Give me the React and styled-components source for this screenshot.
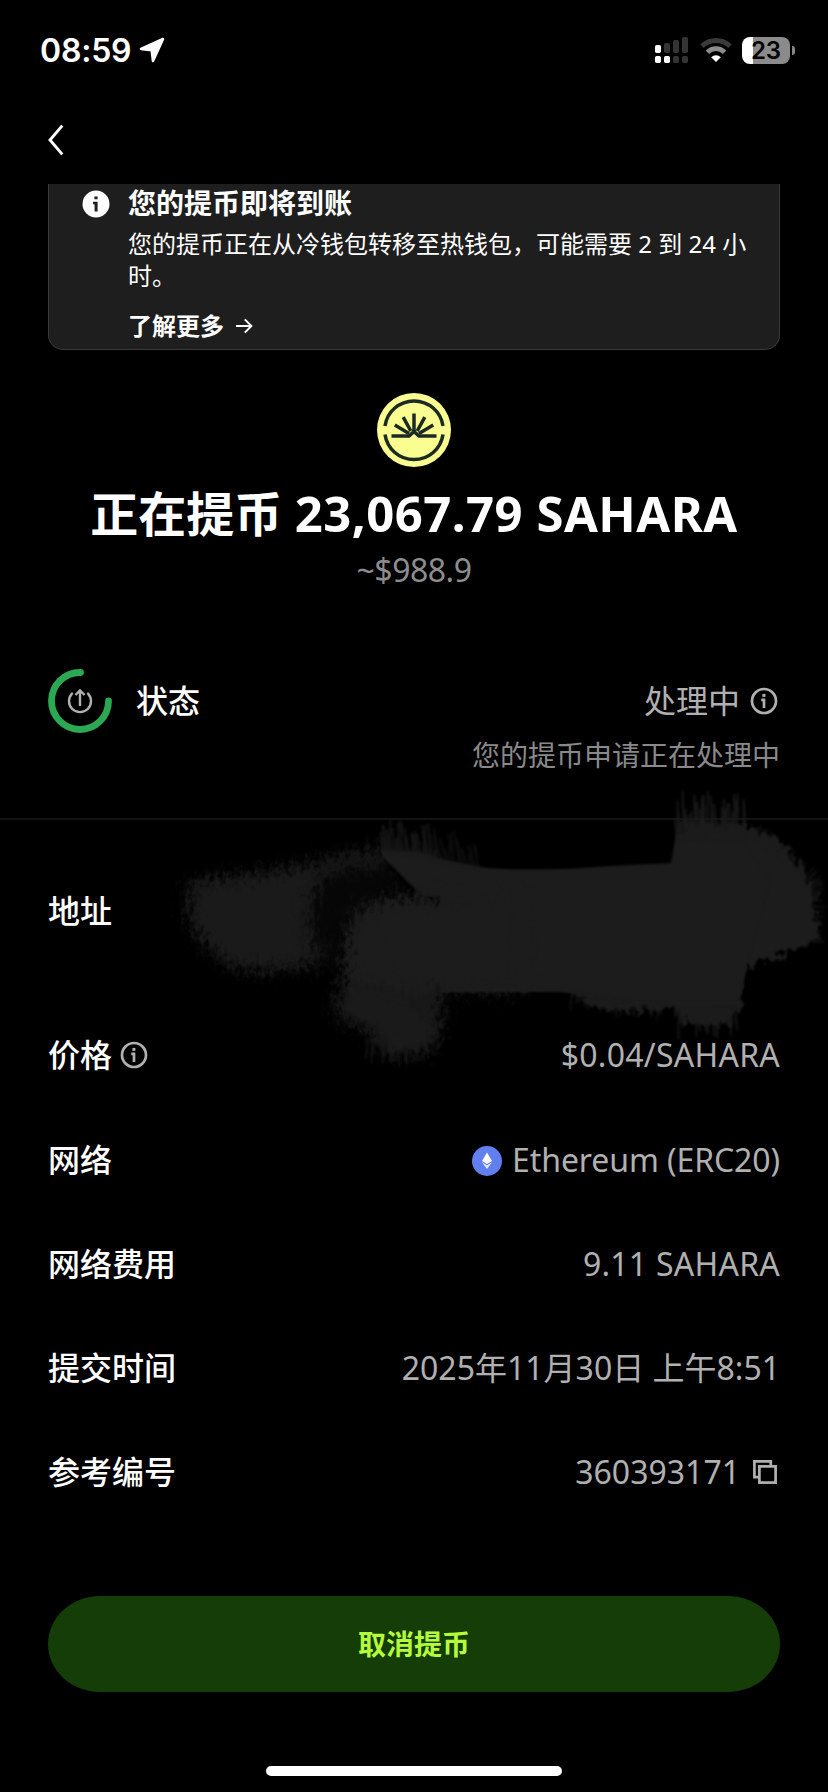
import React from "react";
import styled, { createGlobalStyle } from "styled-components";

const Global = createGlobalStyle`
  * { box-sizing: border-box; }
  html, body { margin: 0; background: #000; }
  body {
    font-family: "Noto Sans", "Noto Sans CJK SC", sans-serif;
    color: #fff;
    font-size: 32px;
  }
  svg { display: block; flex: none; }
`;

const Screen = styled.div`
  position: relative;
  width: 828px;
  height: 1792px;
  background: #000;
  overflow: hidden;
  display: flex;
  flex-direction: column;
`;

const StatusBar = styled.header`
  height: 98px;
  padding: 2px 33px 0 40px;
  display: flex;
  align-items: center;
  justify-content: space-between;
  flex: none;
`;

const Clock = styled.div`
  display: flex;
  align-items: center;
  gap: 8px;
  font: 600 32px/40px Inter, sans-serif;
  span { padding-top: 1px; letter-spacing: -0.2px; }
`;

const Indicators = styled.div`
  display: flex;
  align-items: center;
  gap: 11px;
`;

const Battery = styled.div`
  position: relative;
  width: 48px;
  height: 27px;
  margin-right: 5px;
  margin-left: -1px;
  border-radius: 8px;
  background: linear-gradient(90deg, #fff 11px, #8b8b8b 11px);
  color: #000;
  text-align: center;
  font: 600 24px/27px Inter, sans-serif;
  &::after {
    content: "";
    position: absolute;
    right: -5px;
    top: 9px;
    width: 3px;
    height: 9px;
    border-radius: 0 4px 4px 0;
    background: #858585;
  }
`;

const NavBar = styled.nav`
  height: 86px;
  padding: 25px 0 0 46px;
  flex: none;
`;

const Notice = styled.section`
  width: 732px;
  height: 166px;
  margin: 0 auto;
  padding: 0 30px 0 33px;
  display: flex;
  gap: 18px;
  flex: none;
  background: #1e1e1e;
  border: 1px solid #393939;
  border-top: 0;
  border-radius: 0 0 15px 15px;
`;

const NoticeIcon = styled.div`
  padding-top: 6px;
  width: 28px;
  flex: none;
`;

const NoticeBody = styled.div`
  display: flex;
  flex-direction: column;
`;

const NoticeTitle = styled.h2`
  margin: 0;
  font-size: 28px;
  line-height: 38px;
  font-weight: 600;
`;

const NoticeText = styled.p`
  margin: 6px 0 0;
  font-size: 24px;
  line-height: 32px;
  width: 640px;
`;

const NoticeLink = styled.a`
  margin-top: 18px;
  display: flex;
  align-items: center;
  gap: 12px;
  font-size: 24px;
  line-height: 32px;
  font-weight: 600;
`;

const Summary = styled.section`
  display: flex;
  flex-direction: column;
  align-items: center;
  padding-top: 43px;
  height: 304px;
  flex: none;
`;

const Amount = styled.h1`
  margin: 14px 0 0;
  font-size: 48px;
  line-height: 64px;
  font-weight: 700;
  white-space: nowrap;
  span { font-size: 49px; letter-spacing: 0.5px; }
`;

const Fiat = styled.div`
  margin-top: 2px;
  font-size: 32px;
  line-height: 44px;
  letter-spacing: -0.5px;
  color: #8d8d8d;
`;

const Status = styled.section`
  height: 166px;
  padding: 15px 48px 0;
  border-bottom: 2px solid #121212;
  flex: none;
`;

const Details = styled.section`
  padding: 0 48px;
  height: 776px;
  flex: none;
`;

const Row = styled.div`
  height: ${(p) => p.$height || 104}px;
  padding-bottom: 4px;
  padding-right: ${(p) => p.$right || 0}px;
  display: flex;
  align-items: center;
  justify-content: space-between;
  white-space: nowrap;
  svg { margin: 4px 0 0; }
`;

const Label = styled.div`
  display: flex;
  align-items: center;
  gap: ${(p) => p.$gap || 8}px;
  font-weight: 500;
`;

const Value = styled.div`
  display: flex;
  align-items: center;
  padding-top: ${(p) => p.$drop || 0}px;
  gap: ${(p) => p.$gap || 10}px;
  color: #b0b0b0;
  letter-spacing: ${(p) => p.$track || 0}px;
`;

const StatusNote = styled.div`
  text-align: right;
  font-size: 28px;
  line-height: 44px;
  color: #898989;
`;

const CancelButton = styled.button`
  width: 732px;
  height: 96px;
  margin: 0 auto;
  padding: 0;
  border: 0;
  border-radius: 52px / 48px;
  background: #143d08;
  color: #b5fb3c;
  font: 600 28px/40px "Noto Sans", "Noto Sans CJK SC", sans-serif;
  flex: none;
`;

const HomeBar = styled.div`
  width: 296px;
  height: 10px;
  margin: 74px auto 0;
  border-radius: 5px;
  background: #fff;
  flex: none;
`;

const ScribbleLayer = styled.svg`
  position: absolute;
  left: 0;
  top: 0;
  pointer-events: none;
`;

const InfoIcon = () => (
  <svg width="28" height="28" viewBox="0 0 28 28" fill="none">
    <circle cx="14" cy="14" r="12" stroke="#b0b0b0" strokeWidth="2.7" />
    <rect x="12.4" y="6.9" width="3" height="3" fill="#b0b0b0" />
    <path d="M11.2 12.8H14V21" stroke="#b0b0b0" strokeWidth="2.7" />
  </svg>
);

const Coin = () => (
  <svg width="74" height="74" viewBox="-37 -37 74 74" fill="none">
    <circle r="37" fill="#fafd90" />
    <g stroke="#1b2a22" strokeWidth="3.5">
      <path d="M-29-4A29.3 29.3 0 0 1 29-4" />
      <path d="M-29 4.5A29.3 29.3 0 0 0 29 4.5" />
      <path d="M-22.5 6H-5L0 1.5L5 6H22.5" />
      <path d="M0 2V-16.5M-3.2 1L-10.8-12.8M3.2 1L10.8-12.8M-5 3.5L-19.2-5M5 3.5L19.2-5" />
    </g>
    <path d="M-6.5 7L0-1L6.5 7L4 7L0 3L-4 7Z" fill="#1b2a22" />
  </svg>
);

const rand = (n) => {
  const v = Math.sin(n * 127.1 + 11.7) * 43758.5453;
  return v - Math.floor(v);
};

const bristles = (count, seed, x0, y0, x1, y1, dx, dy, spread) =>
  Array.from({ length: count }, (_, i) => {
    const t = (i + rand(seed + i)) / count;
    const len = 0.15 + 0.85 * rand(seed + i * 3 + 1);
    const x = x0 + (x1 - x0) * t;
    const y = y0 + (y1 - y0) * t;
    const ex = x + dx * len + (rand(seed + i * 7) - 0.5) * spread;
    const ey = y + dy * len;
    return `M${x.toFixed(1)} ${y.toFixed(1)}L${ex.toFixed(1)} ${ey.toFixed(1)}`;
  }).join("");

const Scribble = () => (
  <ScribbleLayer width="828" height="1792" viewBox="0 0 828 1792" fill="none">
    <defs>
      <filter id="rough" x="-10%" y="-10%" width="120%" height="120%" colorInterpolationFilters="sRGB">
        <feTurbulence type="fractalNoise" baseFrequency="0.16 0.09" numOctaves="3" seed="4" />
        <feDisplacementMap in="SourceGraphic" scale="24" xChannelSelector="R" yChannelSelector="G" />
        <feGaussianBlur stdDeviation="1" />
      </filter>
      <filter id="dry" x="-20%" y="-20%" width="140%" height="140%" colorInterpolationFilters="sRGB">
        <feGaussianBlur in="SourceGraphic" stdDeviation="7" result="b" />
        <feTurbulence type="fractalNoise" baseFrequency="0.2 0.14" numOctaves="3" seed="9" result="n" />
        <feDisplacementMap in="b" in2="n" scale="28" xChannelSelector="R" yChannelSelector="G" />
        <feGaussianBlur stdDeviation="0.6" />
      </filter>
      <filter id="soft" x="-5%" y="-5%" width="110%" height="110%" colorInterpolationFilters="sRGB">
        <feGaussianBlur stdDeviation="0.9" />
      </filter>
    </defs>
    <g filter="url(#dry)">
      <path d="M188 882L250 874L318 862L345 854L385 848L385 900L327 915L326 963L264 972L227 966L208 947L190 925Z" fill="#1a1a1a" />
      <path d="M345 925L364 903L430 896L440 992L345 990L342 960Z" fill="#1c1c1c" />
      <path d="M340 985L398 988L442 992L442 1030L425 1056L385 1054L364 1027L333 1018Z" fill="#181818" />
    </g>
    <path d="M318 880L345 868L383 864L410 888L422 897L375 902L340 915L330 950L314 950L310 912Z" fill="#060606" filter="url(#dry)" />
    <g filter="url(#rough)" fill="#1c1c1c">
      <path d="M682 822L744 824L778 840L800 864L817 900L817 938L799 950L747 966L738 1010L732 1024L690 1027L674 1004L650 1011L600 1009L565 990L450 985L440 905L600 880L682 872Z" />
      <path d="M352 989L394 989L432 1030L430 1046L390 1050L370 1020L345 1010Z" fill="#1a1a1a" />
    </g>
    <path d="M380 850L383 857L422 896L440 896L440 992L560 992L620 1000L735 1000L740 1000L748 960L770 880L740 838L676 834L671 863L610 866Q540 872 486 868L445 860L420 852Z" fill="#1c1c1c" filter="url(#soft)" />
    <path d="M375 904Q400 896 428 897L520 897L520 990H395Q365 950 375 904Z" fill="#1c1c1c" filter="url(#dry)" />
    <g stroke="#1b1b1b" strokeWidth="2" filter="url(#soft)">
      <path d={bristles(46, 2, 381, 852, 435, 860, -1, -36, 6)} strokeOpacity=".75" />
      <path d={bristles(30, 5, 430, 860, 480, 870, -6, -36, 6)} strokeOpacity=".45" />
      <path d={bristles(64, 30, 677, 840, 746, 842, -1, -50, 5)} strokeOpacity=".85" />
      <path d={bristles(60, 70, 748, 834, 810, 885, 12, -12, 6)} strokeOpacity=".5" />
      <path d={bristles(35, 90, 812, 880, 812, 943, 12, 0, 8)} strokeOpacity=".5" />
      <path d={bristles(35, 42, 674, 1008, 738, 1006, 2, 32, 5)} strokeOpacity=".75" />
      <path d={bristles(45, 28, 570, 990, 665, 1005, -3, 20, 7)} strokeOpacity=".5" />
      <path d={bristles(32, 52, 367, 1038, 438, 1030, -2, 32, 6)} strokeOpacity=".55" />
    </g>
  </ScribbleLayer>
);

export default function App() {
  return (
    <>
      <Global />
      <Screen>
        <Scribble />
        <StatusBar>
          <Clock>
            <span>08:59</span>
            <svg width="26" height="26" viewBox="0 0 26 26">
              <path d="M24 2L14 24L12.7 13.2L2 12Z" fill="#fff" stroke="#fff" strokeWidth="2.6" strokeLinejoin="round" />
            </svg>
          </Clock>
          <Indicators>
            <svg width="34" height="27" viewBox="0 0 34 27">
              <g fill="#fff">
                <rect x="0" y="8" width="6" height="8" rx="1.7" />
                <rect x="0" y="19" width="6" height="7" rx="1.7" />
                <rect x="9" y="19" width="6" height="7" rx="1.7" />
              </g>
              <g fill="#343434">
                <rect x="9" y="6" width="6" height="10" rx="1.7" />
                <rect x="18" y="3" width="6" height="13" rx="1.7" />
                <rect x="27" y="0" width="6" height="16" rx="1.7" />
                <rect x="18" y="19" width="6" height="7" rx="1.7" />
                <rect x="27" y="19" width="6" height="7" rx="1.7" />
              </g>
            </svg>
            <svg width="32" height="26" viewBox="0 0 32 26" fill="none">
              <path d="M2 9.2A20 20 0 0 1 30 9.2" stroke="#3a3a3a" strokeWidth="4.8" />
              <path d="M7.4 15.2A12.2 12.2 0 0 1 24.6 15.2" stroke="#8c8c8c" strokeWidth="4.8" />
              <path d="M16 25L11.2 20.2A6.8 6.8 0 0 1 20.8 20.2Z" fill="#fff" />
            </svg>
            <Battery>23</Battery>
          </Indicators>
        </StatusBar>
        <NavBar>
          <svg width="20" height="34" viewBox="0 0 20 34" fill="none">
            <path d="M16.3 2.6L4 17L16.3 31.4" stroke="#fff" strokeWidth="2.9" />
          </svg>
        </NavBar>
        <Notice>
          <NoticeIcon>
            <svg width="28" height="28" viewBox="0 0 28 28">
              <circle cx="14" cy="14" r="13.5" fill="#fff" />
              <path d="M12.4 6.4H15.6V9.2H12.4ZM11 11.8H15.6V21.4H12.6V14.2H11Z" fill="#1e1e1e" />
            </svg>
          </NoticeIcon>
          <NoticeBody>
            <NoticeTitle>您的提币即将到账</NoticeTitle>
            <NoticeText>您的提币正在从冷钱包转移至热钱包，可能需要 2 到 24 小时。</NoticeText>
            <NoticeLink>
              了解更多
              <svg width="17" height="16" viewBox="0 0 17 16" fill="none">
                <path d="M0 8H15M8.8 1.4L15.4 8L8.8 14.6" stroke="#fff" strokeWidth="2" />
              </svg>
            </NoticeLink>
          </NoticeBody>
        </Notice>
        <Summary>
          <Coin />
          <Amount>
            正在提币 <span>23,067.79 SAHARA</span>
          </Amount>
          <Fiat>~$988.9</Fiat>
        </Summary>
        <Status>
          <Row $height={64} $right={2}>
            <Label $gap={24}>
              <svg width="64" height="64" viewBox="0 0 64 64" fill="none">
                <path d="M32.5 3.5A28.5 28.5 0 1 0 60.5 32" stroke="#2ca852" strokeWidth="6.8" strokeLinecap="round" />
                <g stroke="#b0b0b0" strokeWidth="2.4">
                  <path d="M24 24.6A11 11 0 1 0 40 24.6" strokeLinecap="round" />
                  <path d="M32 37V22M27.4 26L32 21.4L36.6 26" />
                </g>
              </svg>
              状态
            </Label>
            <Value $gap={10}>
              处理中
              <InfoIcon />
            </Value>
          </Row>
          <StatusNote>您的提币申请正在处理中</StatusNote>
        </Status>
        <Details>
          <Row $height={182}>
            <Label>地址</Label>
          </Row>
          <Row $height={106}>
            <Label>
              价格
              <InfoIcon />
            </Label>
            <Value $drop={2} $track={0.25}>$0.04/SAHARA</Value>
          </Row>
          <Row>
            <Label>网络</Label>
            <Value $drop={2} $track={-0.1}>
              <svg width="30" height="30" viewBox="0 0 30 30">
                <circle cx="15" cy="15" r="15" fill="#627ff0" />
                <path d="M15 6.5L20 15L15 18L10 15Z" fill="#fff" />
                <path d="M10 16.3L15 19.3L20 16.3L15 23Z" fill="#e8ecff" />
              </svg>
              Ethereum (ERC20)
            </Value>
          </Row>
          <Row>
            <Label>网络费用</Label>
            <Value $drop={2} $track={0.25}>9.11 SAHARA</Value>
          </Row>
          <Row>
            <Label>提交时间</Label>
            <Value>2025年11月30日 上午8:51</Value>
          </Row>
          <Row>
            <Label>参考编号</Label>
            <Value $drop={2} $gap={12}>
              360393171
              <svg width="28" height="28" viewBox="0 0 28 28" fill="none" stroke="#b0b0b0" strokeWidth="2.7">
                <rect x="7.4" y="7.4" width="16.2" height="16.2" />
                <path d="M7.4 18.2H2.4V2.4H18.8V7.4" />
              </svg>
            </Value>
          </Row>
        </Details>
        <CancelButton>取消提币</CancelButton>
        <HomeBar />
      </Screen>
    </>
  );
}
